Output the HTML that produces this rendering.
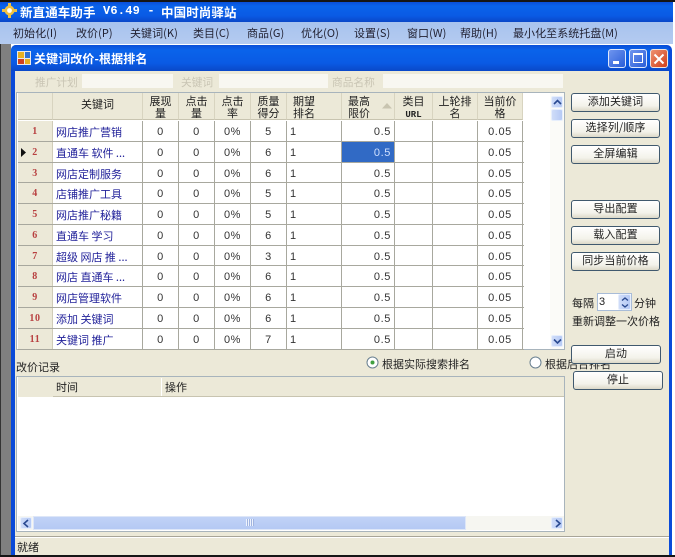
<!DOCTYPE html>
<html lang="zh"><head><meta charset="utf-8"><title>新直通车助手</title>
<style>
html,body{margin:0;padding:0;background:#fff}
body{position:relative;width:675px;height:557px;overflow:hidden;font:11px "WenQuanYi Zen Hei","Noto Sans CJK SC","Liberation Sans",sans-serif;color:#222;filter:blur(.3px)}
div,span{position:absolute;box-sizing:border-box;white-space:nowrap}
.title{background:linear-gradient(#0a4fd8,#0a63ea 20%,#0a5ae4 70%,#0a48c8)}
.m{top:25px;font-size:11px;color:#223;letter-spacing:.05px}
.lb{color:#c9c5b4;top:75px;font-size:10.7px}
.in{background:#f8f7f1;top:74px;height:14px}
.btn{left:571px;width:89px;height:19px;border:1.5px solid #40596e;border-radius:3px;background:linear-gradient(#fff,#f3f2ea 70%,#dcd8c8);text-align:center;line-height:15px;font-size:11px;color:#222;letter-spacing:.1px}
.hd{background:#ece9d8;top:93px;height:27px;border-right:1px solid #d8d4c0;border-bottom:1px solid #c8c4b0;text-align:center;line-height:12px;font-size:11px;padding-top:2px;color:#222}
.r{left:18px;width:506px;height:21px;display:grid;grid-template-columns:35px 90px 36px 36px 36px 36px 55px 53px 38px 45px 45px;background:#fff;border-bottom:1px solid #a8a89e}
.r.s{height:20px}
.r span{position:static;display:block;border-right:1px solid #a8a89e;text-align:center;font:11px/22px "Liberation Sans",sans-serif;letter-spacing:.6px;color:#333;overflow:hidden}
.r span:nth-child(1){background:#ece9d8;color:#b84040;font-weight:bold;font-size:10px;font-family:"Liberation Serif",serif;border-right:1px solid #d0ccb8}
.r span:nth-child(2){text-align:left;padding-left:3px;color:#22229a;font:11px/22px "WenQuanYi Zen Hei","Noto Sans CJK SC",sans-serif;letter-spacing:0}
.r span:nth-child(7){text-align:left;padding-left:3px}
.r span:nth-child(8){text-align:right;padding-right:3px}
.sb{background:linear-gradient(90deg,#cfdcf8,#b6caf5);border:1px solid #e6eefc;border-radius:2px;color:#2a4a90}
</style></head><body>
<div style="left:0;top:0;width:675px;height:2px;background:#151515"></div>
<div class="title" style="left:0;top:2px;width:673px;height:20px"></div>
<svg style="position:absolute;left:2px;top:3px" width="15" height="15" viewBox="0 0 15 15"><g fill="#f0c040"><circle cx="7.5" cy="7.5" r="5"/><rect x="6" y="0" width="3" height="15"/><rect x="0" y="6" width="15" height="3"/></g><circle cx="7.5" cy="7.5" r="2.4" fill="#fff"/></svg>
<div style="left:20px;top:2px;color:#fff;font-weight:bold;font-size:12.5px;line-height:19px;letter-spacing:.1px">新直通车助手</div>
<div style="left:103px;top:2px;color:#fff;font:bold 12px/19px 'Liberation Mono',monospace;letter-spacing:.2px">V6.49 -</div>
<div style="left:161px;top:2px;color:#fff;font-weight:bold;font-size:12.5px;line-height:19px;letter-spacing:.1px">中国时尚驿站</div>

<div style="left:0;top:22px;width:673px;height:22px;background:linear-gradient(#a8c3ee,#b4cbf0)"></div>
<div class="m" style="left:13px">初始化(I)</div>
<div class="m" style="left:76px">改价(P)</div>
<div class="m" style="left:130px">关键词(K)</div>
<div class="m" style="left:193px">类目(C)</div>
<div class="m" style="left:247px">商品(G)</div>
<div class="m" style="left:301px">优化(O)</div>
<div class="m" style="left:354px">设置(S)</div>
<div class="m" style="left:407px">窗口(W)</div>
<div class="m" style="left:460px">帮助(H)</div>
<div class="m" style="left:513px">最小化至系统托盘(M)</div>

<div style="left:0;top:44px;width:11px;height:511px;background:#7f7f7f"></div>
<div style="left:0;top:44px;width:1px;height:511px;background:#333"></div>
<div style="left:11px;top:45px;width:661px;height:510px;background:#0a4ad8;border-radius:5px 5px 0 0"></div>
<div class="title" style="left:11px;top:45px;width:658px;height:26px;border-radius:5px 5px 0 0"></div>
<svg style="position:absolute;left:17px;top:51px" width="14" height="14" viewBox="0 0 14 14"><rect width="14" height="14" fill="#e8e8e8"/><rect x="1" y="1" width="6" height="6" fill="#e8b020"/><rect x="8" y="1" width="5" height="6" fill="#3070d0"/><rect x="1" y="8" width="6" height="5" fill="#d04020"/><rect x="8" y="8" width="5" height="5" fill="#e8b020"/></svg>
<div style="left:34px;top:50px;color:#fff;font-weight:bold;font-size:12px;line-height:17px;letter-spacing:.1px">关键词改价-根据排名</div>
<div style="left:608px;top:49px;width:18px;height:19px;background:linear-gradient(135deg,#6f95ee,#2a5ed8);border:1px solid #dfe8fb;border-radius:3px"><div style="left:4px;top:11px;width:6px;height:3px;background:#fff"></div></div>
<div style="left:629px;top:49px;width:18px;height:19px;background:linear-gradient(135deg,#6f95ee,#2a5ed8);border:1px solid #dfe8fb;border-radius:3px"><div style="left:3px;top:3px;width:10px;height:10px;border:1px solid #fff;border-top-width:2px"></div></div>
<div style="left:650px;top:49px;width:18px;height:19px;background:linear-gradient(135deg,#ee9070,#d0401c);border:1px solid #f2e4dc;border-radius:3px"><svg style="position:absolute;left:2px;top:3px" width="12" height="12" viewBox="0 0 12 12"><path d="M1.5 1.5l9 9M10.5 1.5l-9 9" stroke="#fff" stroke-width="2"/></svg></div>

<div style="left:15px;top:71px;width:654px;height:484px;background:#ece9d8"></div>
<div class="lb" style="left:35px">推广计划</div><div class="in" style="left:82px;width:91px"></div>
<div class="lb" style="left:181px">关键词</div><div class="in" style="left:219px;width:109px"></div>
<div class="lb" style="left:332px">商品名称</div><div class="in" style="left:383px;width:180px"></div>

<div style="left:16px;top:92px;width:549px;height:258px;background:#fff;border:1px solid #a8b4bc"></div>
<div class="hd" style="left:18px;width:35px"></div>
<div class="hd" style="left:53px;width:90px;line-height:23px;padding:0">关键词</div>
<div class="hd" style="left:143px;width:36px">展现<br>量</div>
<div class="hd" style="left:179px;width:36px">点击<br>量</div>
<div class="hd" style="left:215px;width:36px">点击<br>率</div>
<div class="hd" style="left:251px;width:36px">质量<br>得分</div>
<div class="hd" style="left:287px;width:55px;text-align:left;padding-left:6px">期望<br>排名</div>
<div class="hd" style="left:342px;width:53px;text-align:left;padding-left:6px">最高<br>限价</div>
<svg style="position:absolute;left:382px;top:103px" width="10" height="6"><path d="M0 5.5L5 0l5 5.5z" fill="#c8c4b0"/></svg>
<div class="hd" style="left:395px;width:38px">类目<br><span style="position:static;font:bold 9px 'Liberation Mono',monospace">URL</span></div>
<div class="hd" style="left:433px;width:45px">上轮排<br>名</div>
<div class="hd" style="left:478px;width:45px;">当前价<br>格</div>

<div class="r" style="top:121px"><span>1</span><span>网店推广营销</span><span>0</span><span>0</span><span>0%</span><span>5</span><span>1</span><span>0.5</span><span></span><span></span><span>0.05</span></div>
<div class="r" style="top:142px"><span>2</span><span>直通车 软件 ...</span><span>0</span><span>0</span><span>0%</span><span>6</span><span>1</span><span style="background:#316ac5;color:#cfe0ff">0.5</span><span></span><span></span><span>0.05</span></div>
<div class="r s" style="top:163px"><span>3</span><span>网店定制服务</span><span>0</span><span>0</span><span>0%</span><span>6</span><span>1</span><span>0.5</span><span></span><span></span><span>0.05</span></div>
<div class="r" style="top:183px"><span>4</span><span>店铺推广工具</span><span>0</span><span>0</span><span>0%</span><span>5</span><span>1</span><span>0.5</span><span></span><span></span><span>0.05</span></div>
<div class="r" style="top:204px"><span>5</span><span>网店推广秘籍</span><span>0</span><span>0</span><span>0%</span><span>5</span><span>1</span><span>0.5</span><span></span><span></span><span>0.05</span></div>
<div class="r" style="top:225px"><span>6</span><span>直通车 学习</span><span>0</span><span>0</span><span>0%</span><span>6</span><span>1</span><span>0.5</span><span></span><span></span><span>0.05</span></div>
<div class="r s" style="top:246px"><span>7</span><span>超级 网店 推 ...</span><span>0</span><span>0</span><span>0%</span><span>3</span><span>1</span><span>0.5</span><span></span><span></span><span>0.05</span></div>
<div class="r" style="top:266px"><span>8</span><span>网店 直通车 ...</span><span>0</span><span>0</span><span>0%</span><span>6</span><span>1</span><span>0.5</span><span></span><span></span><span>0.05</span></div>
<div class="r" style="top:287px"><span>9</span><span>网店管理软件</span><span>0</span><span>0</span><span>0%</span><span>6</span><span>1</span><span>0.5</span><span></span><span></span><span>0.05</span></div>
<div class="r" style="top:308px"><span>10</span><span>添加 关键词</span><span>0</span><span>0</span><span>0%</span><span>6</span><span>1</span><span>0.5</span><span></span><span></span><span>0.05</span></div>
<div class="r" style="top:329px"><span>11</span><span>关键词 推广</span><span>0</span><span>0</span><span>0%</span><span>7</span><span>1</span><span>0.5</span><span></span><span></span><span>0.05</span></div>
<svg style="position:absolute;left:21px;top:148px" width="6" height="9"><path d="M0 0l5 4.5L0 9z" fill="#111"/></svg>

<div style="left:550px;top:93px;width:14px;height:256px;background:#fbfbf8"></div>
<div class="sb" style="left:551px;top:96px;width:12px;height:12px"><svg style="position:absolute;left:1px;top:2px" width="9" height="7"><path d="M1 5l3.5-3.5L8 5" fill="none" stroke="#2a4a90" stroke-width="1.6"/></svg></div>
<div class="sb" style="left:551px;top:109px;width:12px;height:12px"></div>
<div class="sb" style="left:551px;top:335px;width:12px;height:12px"><svg style="position:absolute;left:1px;top:2px" width="9" height="7"><path d="M1 1.5L4.5 5 8 1.5" fill="none" stroke="#2a4a90" stroke-width="1.6"/></svg></div>

<div style="left:16px;top:359px;font-size:11px">改价记录</div>
<svg style="position:absolute;left:366px;top:356px" width="13" height="13"><circle cx="6.5" cy="6.5" r="5.5" fill="#fff" stroke="#6a8090"/><circle cx="6.5" cy="6.5" r="2" fill="#40a040"/></svg>
<div style="left:382px;top:356px;font-size:11px">根据实际搜索排名</div>
<svg style="position:absolute;left:529px;top:356px" width="13" height="13"><circle cx="6.5" cy="6.5" r="5.5" fill="#fff" stroke="#6a8090"/></svg>
<div style="left:545px;top:356px;font-size:11px">根据后台排名</div>

<div style="left:16px;top:376px;width:549px;height:156px;background:#fff;border:1px solid #a8b4bc"></div>
<div style="left:18px;top:377px;width:546px;height:20px;background:#ece9d8"></div>
<div style="left:53px;top:396px;width:511px;height:1px;background:#c8c4b0"></div>
<div style="left:161px;top:378px;width:1px;height:18px;background:#fff"></div>
<div style="left:56px;top:379px">时间</div>
<div style="left:165px;top:379px">操作</div>
<div style="left:18px;top:516px;width:546px;height:14px;background:#f6f6f1"></div>
<div style="left:33px;top:516px;width:433px;height:14px;background:linear-gradient(#c0d2f6,#b4c9f4);border:1px solid #dde6f8"></div>
<div style="left:246px;top:519px;width:8px;height:7px;background:repeating-linear-gradient(90deg,#eef3fd 0 1px,#a0b4e0 1px 2px)"></div>
<div class="sb" style="left:20px;top:517px;width:12px;height:12px"><svg style="position:absolute;left:1px;top:1px" width="8" height="9"><path d="M6 1L2 4.5 6 8" fill="none" stroke="#2a4a90" stroke-width="1.6"/></svg></div>
<div class="sb" style="left:551px;top:517px;width:12px;height:12px"><svg style="position:absolute;left:2px;top:1px" width="8" height="9"><path d="M2 1l4 3.5L2 8" fill="none" stroke="#2a4a90" stroke-width="1.6"/></svg></div>

<div class="btn" style="top:93px">添加关键词</div>
<div class="btn" style="top:119px">选择列/顺序</div>
<div class="btn" style="top:145px">全屏编辑</div>
<div class="btn" style="top:200px">导出配置</div>
<div class="btn" style="top:226px">载入配置</div>
<div class="btn" style="top:252px">同步当前价格</div>
<div style="left:572px;top:295px">每隔</div>
<div style="left:597px;top:293px;width:35px;height:18px;background:#fff;border:1px solid #a8bcd8"></div>
<div style="left:599px;top:295px;font:11px/14px 'Liberation Sans',sans-serif">3</div>
<div class="sb" style="left:618px;top:294px;width:13px;height:16px"><svg style="position:absolute;left:2px;top:1px" width="8" height="13"><path d="M1 4.5L4 2l3 2.5M1 8.5L4 11l3-2.5" fill="none" stroke="#2a4a90" stroke-width="1.4"/></svg></div>
<div style="left:634px;top:295px">分钟</div>
<div style="left:572px;top:313px">重新调整一次价格</div>
<div class="btn" style="top:345px;width:90px">启动</div>
<div class="btn" style="left:573px;top:371px;width:90px">停止</div>

<div style="left:15px;top:536px;width:654px;height:1px;background:#a8a598"></div>
<div style="left:15px;top:537px;width:654px;height:1px;background:#fff"></div>
<div style="left:17px;top:539px">就绪</div>
<div style="left:0;top:555px;width:675px;height:2px;background:#151515"></div>
</body></html>
